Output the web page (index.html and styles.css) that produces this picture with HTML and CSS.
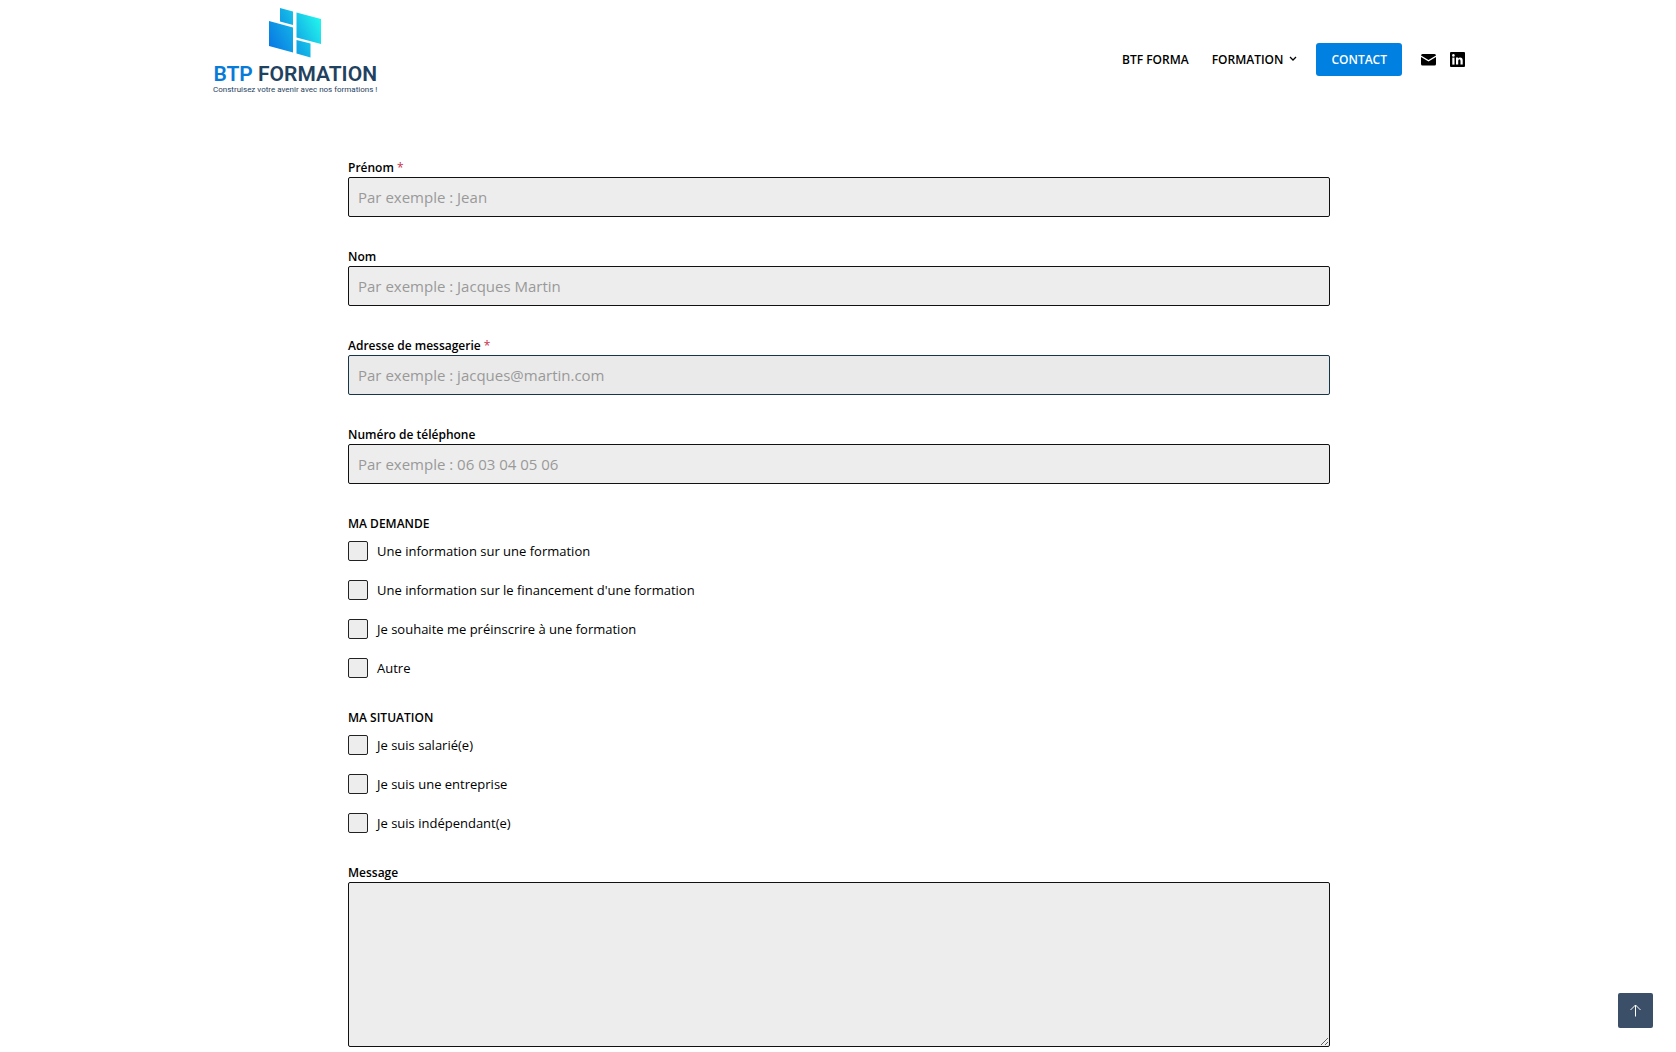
FILE: index.html
```html
<!DOCTYPE html>
<html lang="fr">
<head>
    <meta charset="UTF-8">
    <meta name="viewport" content="width=device-width, initial-scale=1.0">
    <title>Contact - BTP Formation</title>
    <link rel="stylesheet" href="styles.css">
</head>
<body>

<header class="header">
    <a class="logo" href="#">
        <svg class="logo-mark" viewBox="0 0 54 50" aria-hidden="true">
            <defs>
                <linearGradient id="blues" gradientUnits="userSpaceOnUse" x1="0" y1="36" x2="50" y2="10">
                    <stop offset="0" stop-color="#0878e4"/>
                    <stop offset="0.5" stop-color="#12ade6"/>
                    <stop offset="1" stop-color="#22f2ec"/>
                </linearGradient>
            </defs>
            <g fill="url(#blues)">
                <path d="M12 0 L25 3.5 V17 L12 13.5 Z"/>
                <path d="M1 13 L25 19.5 V44.5 L1 38 Z"/>
                <path d="M28.5 4.5 L53 11 V36 L28.5 29.5 Z"/>
                <path d="M28.5 32 L42.5 35.5 V49.5 L28.5 45.5 Z"/>
            </g>
        </svg>
        <span class="logo-name"><span class="logo-btp">BTP</span> FORMATION</span>
        <span class="logo-tagline">Construisez votre avenir avec nos formations !</span>
    </a>

    <nav class="nav">
        <div class="links">
            <a href="#">BTF FORMA</a>
            <a class="has-menu" href="#">FORMATION
                <svg width="8" height="6" viewBox="0 0 8 6" aria-hidden="true"><path d="M1 1 L4 4 L7 1" fill="none" stroke="#000" stroke-width="1.3"/></svg>
            </a>
        </div>
        <a class="btn-contact" href="#">CONTACT</a>
        <div class="social">
            <a href="#" aria-label="E-mail">
                <svg width="15" height="15" viewBox="0 0 15 15" aria-hidden="true">
                    <path d="M1.5 2 H13.5 Q15 2 15 3.5 L7.5 8 L0 3.5 Q0 2 1.5 2 Z"/>
                    <path d="M0 5 L7.5 9.500 L15 5 V12 Q15 13.5 13.5 13.5 H1.5 Q0 13.5 0 12 Z"/>
                </svg>
            </a>
            <a href="#" aria-label="LinkedIn">
                <svg width="15" height="15" viewBox="0 0 15 15" aria-hidden="true">
                    <rect width="15" height="15" rx="1"/>
                    <g fill="#fff">
                        <circle cx="3.4" cy="3.4" r="1.3"/>
                        <rect x="2.3" y="5.6" width="2.2" height="7"/>
                        <path d="M6 5.6 H8.1 V6.6 Q8.8 5.4 10.2 5.4 Q12.7 5.4 12.7 8.4 V12.6 H10.5 V8.9 Q10.5 7.3 9.4 7.3 Q8.2 7.3 8.2 8.9 V12.6 H6 Z"/>
                    </g>
                </svg>
            </a>
        </div>
    </nav>
</header>

<main class="container">
    <form class="form">
        <div class="field">
            <label for="prenom">Prénom <span class="required">*</span></label>
            <input type="text" id="prenom" placeholder="Par exemple : Jean" required>
        </div>

        <div class="field">
            <label for="nom">Nom</label>
            <input type="text" id="nom" placeholder="Par exemple : Jacques Martin">
        </div>

        <div class="field">
            <label for="email">Adresse de messagerie <span class="required">*</span></label>
            <input type="email" id="email" class="hovered" placeholder="Par exemple : jacques@martin.com" required>
        </div>

        <div class="field">
            <label for="tel">Numéro de téléphone</label>
            <input type="tel" id="tel" placeholder="Par exemple : 06 03 04 05 06">
        </div>

        <fieldset>
            <legend>MA DEMANDE</legend>
            <div class="choices">
                <label><input type="checkbox" name="demande"> Une information sur une formation</label>
                <label><input type="checkbox" name="demande"> Une information sur le financement d'une formation</label>
                <label><input type="checkbox" name="demande"> Je souhaite me préinscrire à une formation</label>
                <label><input type="checkbox" name="demande"> Autre</label>
            </div>
        </fieldset>

        <fieldset>
            <legend>MA SITUATION</legend>
            <div class="choices">
                <label><input type="checkbox" name="situation"> Je suis salarié(e)</label>
                <label><input type="checkbox" name="situation"> Je suis une entreprise</label>
                <label><input type="checkbox" name="situation"> Je suis indépendant(e)</label>
            </div>
        </fieldset>

        <div class="field">
            <label for="message">Message</label>
            <textarea id="message"></textarea>
        </div>
    </form>
</main>

<button class="to-top" type="button" aria-label="Haut de page">
    <svg width="13" height="13" viewBox="0 0 13 13" aria-hidden="true"><path d="M6.5 12.5 V1 M1.5 6 L6.5 1 L11.5 6" fill="none" stroke="#fff" stroke-width="1"/></svg>
</button>

</body>
</html>
```
FILE: styles.css
```css
* {
    box-sizing: border-box;
}
body {
    font-family: "Segoe UI", "Open Sans", sans-serif;
    font-size: 13px;
    color: #000;
    background-color: #fff;
    margin: 0;
    padding-left: 2px;
}
a {
    color: inherit;
    text-decoration: none;
}
.header {
    display: flex;
    justify-content: space-between;
    align-items: center;
    max-width: 1252px;
    height: 102px;
    margin: 0 auto;
}
.logo {
    display: flex;
    flex-direction: column;
    align-items: center;
    font-family: Roboto, sans-serif;
    color: #1f4260;
}
.logo-mark {
    width: 54px;
    height: 50px;
}
.logo-name {
    font-size: 21px;
    font-weight: 600;
    line-height: 24px;
    margin-top: 4px;
}
.logo-btp {
    color: #087bd8;
}
.logo-tagline {
    font-size: 8px;
    line-height: 8px;
}
.nav {
    display: flex;
    align-items: center;
    margin-top: 16px;
    gap: 19px;
    font-size: 12px;
    font-weight: 600;
}
.links {
    display: flex;
    gap: 23px;
}
.has-menu {
    display: flex;
    align-items: center;
    gap: 6px;
}
.btn-contact {
    background-color: #0080e0;
    color: #fff;
    border-radius: 3px;
    padding: 0 15px;
    line-height: 33px;
}
.social {
    display: flex;
    gap: 14px;
}
.social svg {
    display: block;
}
.container {
    max-width: 982px;
    margin: 56px auto 0;
}
.form {
    display: flex;
    flex-direction: column;
    gap: 30px;
}
.field {
    display: flex;
    flex-direction: column;
}
.field label, legend {
    font-size: 12px;
    font-weight: 600;
    line-height: 19px;
}
.required {
    color: #c9304a;
    font-weight: 400;
}
.field input, .field textarea {
    width: 100%;
    background-color: #ededed;
    border: 1px solid #111;
    border-radius: 2px;
    padding: 0 9px;
    font-family: inherit;
    font-size: 15px;
    color: #000;
}
.field input {
    height: 40px;
}
.field .hovered {
    background-color: #eaeaea;
    border-color: #17364a;
}
.field textarea {
    display: block;
    height: 165px;
    padding: 9px;
    resize: vertical;
}
::placeholder {
    color: #999;
    opacity: 1;
}
fieldset {
    border: none;
    margin: 0;
    padding: 0;
}
legend {
    padding: 0;
}
.choices {
    display: flex;
    flex-direction: column;
    align-items: flex-start;
    gap: 19px;
    padding-top: 8px;
}
.choices label {
    display: flex;
    align-items: center;
    gap: 9px;
    line-height: 20px;
}
.choices input {
    appearance: none;
    width: 20px;
    height: 20px;
    margin: 0;
    background-color: #ededed;
    border: 1px solid #222;
    border-radius: 2px;
}
.choices input:checked {
    background-color: #0080e0;
}
.to-top {
    position: fixed;
    right: 23px;
    bottom: 24px;
    display: flex;
    align-items: center;
    justify-content: center;
    width: 35px;
    height: 35px;
    padding: 0;
    border: none;
    border-radius: 2px;
    background-color: #3b5068;
    cursor: pointer;
}
```
